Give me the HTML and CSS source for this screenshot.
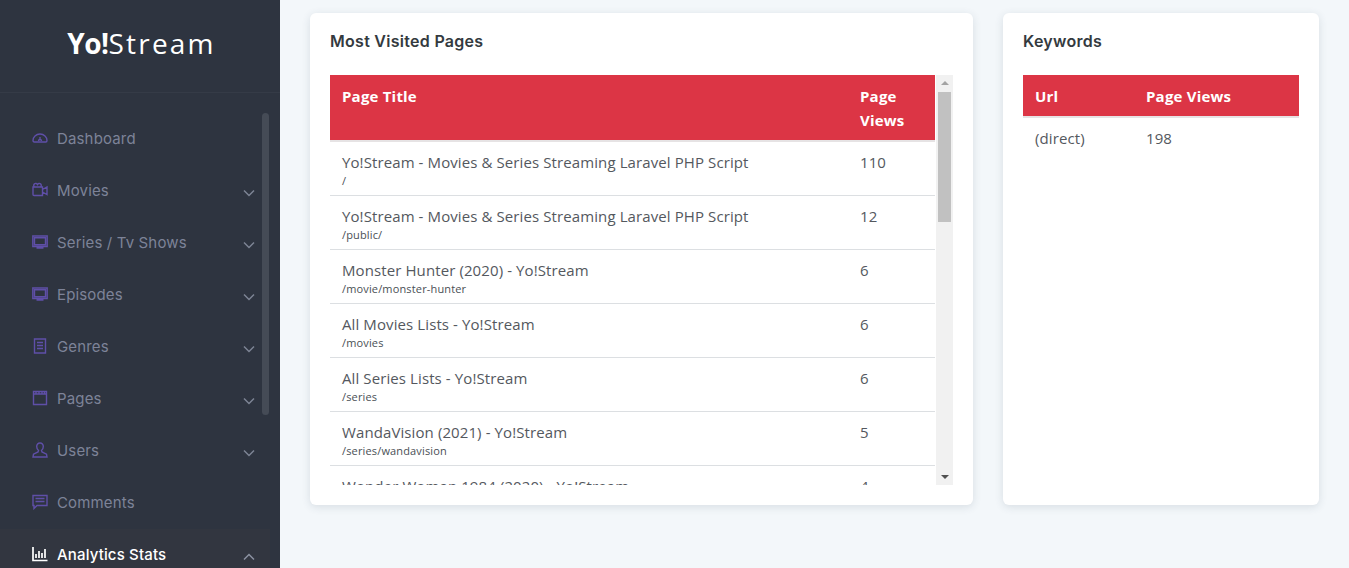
FILE: index.html
```html
<!DOCTYPE html>
<html lang="en">
<head>
<meta charset="utf-8">
<title>Analytics Stats</title>
<link rel="stylesheet" href="styles.css">
</head>
<body>
<div class="app">
  <aside class="sidebar">
    <div class="brand"><span class="brand-yo">Yo!</span><span class="brand-stream">Stream</span></div>
    <span class="side-thumb"></span>
    <nav class="menu">
      <a class="item"><svg class="ico" viewBox="0 0 16 16"><path d="M1 10.500C1 7 4 4 8 4s7 3 7 6.500c0 .8-.5 1.500-1.300 1.500H2.300C1.500 12 1 11.300 1 10.500zM8 7v3M6.500 11a1.500 1.500 0 0 1 3 0"/></svg><span>Dashboard</span></a>
      <a class="item"><svg class="ico" viewBox="0 0 16 16"><path d="M1 5h9.500v8.500H2a1 1 0 0 1-1-1zM10.500 7.500 15 5v7.500l-4.500-2.500M2.500 5a2 2 0 1 1 3-2.500 2 2 0 1 1 3 2.500"/></svg><span>Movies</span><svg class="chev" viewBox="0 0 14 14"><path d="M2 4.500 7 9.500l5-5"/></svg></a>
      <a class="item"><svg class="ico" viewBox="0 0 16 16"><path d="M.8 2h14.400v10.500H.8zM2.500 3.700h11v7h-11zM4.500 14h7"/></svg><span>Series / Tv Shows</span><svg class="chev" viewBox="0 0 14 14"><path d="M2 4.500 7 9.500l5-5"/></svg></a>
      <a class="item"><svg class="ico" viewBox="0 0 16 16"><path d="M.8 2h14.400v10.500H.8zM2.500 3.700h11v7h-11zM4.500 14h7"/></svg><span>Episodes</span><svg class="chev" viewBox="0 0 14 14"><path d="M2 4.500 7 9.500l5-5"/></svg></a>
      <a class="item"><svg class="ico" viewBox="0 0 16 16"><path d="M2.500 1h11v14h-11zM5 4.500h6M5 7.500h6M5 10.500h6"/></svg><span>Genres</span><svg class="chev" viewBox="0 0 14 14"><path d="M2 4.500 7 9.500l5-5"/></svg></a>
      <a class="item"><svg class="ico" viewBox="0 0 16 16"><path d="M1.500 1.500h13v13h-13zM1.500 4h13M4 1.500V4M7 1.500V4M10 1.500V4M12.500 1.500V4"/></svg><span>Pages</span><svg class="chev" viewBox="0 0 14 14"><path d="M2 4.500 7 9.500l5-5"/></svg></a>
      <a class="item"><svg class="ico" viewBox="0 0 16 16"><path d="M8 1a3.300 3.300 0 0 0-3.300 3.500c0 2 1 3.300 1.800 4L6 10l-4.500 2.200L1 15h14l-.5-2.800L10 10l-.5-1.500c.8-.7 1.800-2 1.800-4A3.300 3.300 0 0 0 8 1z"/></svg><span>Users</span><svg class="chev" viewBox="0 0 14 14"><path d="M2 4.500 7 9.500l5-5"/></svg></a>
      <a class="item"><svg class="ico" viewBox="0 0 16 16"><path d="M1 1.500h14v10H5L2 14.500v-3H1zM3.500 4.500h9M3.500 7.500h9"/></svg><span>Comments</span></a>
      <a class="item active"><svg class="ico" viewBox="0 0 16 16"><path d="M1 1v13.500h14.500M4 12V8M7 12V5M10 12V7M13 12V3"/></svg><span>Analytics Stats</span><svg class="chev" viewBox="0 0 14 14"><path d="M2 9.500 7 4.500l5 5"/></svg></a>
    </nav>
  </aside>
  <main class="main">
    <section class="card card-pages">
      <h2 class="card-title">Most Visited Pages</h2>
      <div class="scroller">
        <div class="scroll-body">
          <table class="data">
            <thead>
              <tr><th>Page Title</th><th class="col-views">Page Views</th></tr>
            </thead>
            <tbody>
              <tr><td>Yo!Stream - Movies &amp; Series Streaming Laravel PHP Script<small>/</small></td><td>110</td></tr>
              <tr><td>Yo!Stream - Movies &amp; Series Streaming Laravel PHP Script<small>/public/</small></td><td>12</td></tr>
              <tr><td>Monster Hunter (2020) - Yo!Stream<small>/movie/monster-hunter</small></td><td>6</td></tr>
              <tr><td>All Movies Lists - Yo!Stream<small>/movies</small></td><td>6</td></tr>
              <tr><td>All Series Lists - Yo!Stream<small>/series</small></td><td>6</td></tr>
              <tr><td>WandaVision (2021) - Yo!Stream<small>/series/wandavision</small></td><td>5</td></tr>
              <tr><td>Wonder Woman 1984 (2020) - Yo!Stream</td><td>4</td></tr>
            </tbody>
          </table>
        </div>
        <div class="bar">
          <span class="arrow arrow-up"></span>
          <span class="bar-thumb"></span>
          <span class="arrow arrow-down"></span>
        </div>
      </div>
    </section>
    <section class="card card-keys">
      <h2 class="card-title">Keywords</h2>
      <table class="data keys">
        <thead><tr><th class="col-url">Url</th><th>Page Views</th></tr></thead>
        <tbody><tr><td>(direct)</td><td>198</td></tr></tbody>
      </table>
    </section>
  </main>
</div>
</body>
</html>
```
FILE: styles.css
```css
* { box-sizing: border-box; }
html, body { margin: 0; height: 100%; overflow: hidden; }
body { font-family: "Open Sans", sans-serif; color: #3a3f45; background: #f3f7fa; }
.app { display: flex; height: 568px; }

.sidebar { position: relative; width: 280px; flex: none; background: #2e3440; overflow: hidden; }
.brand { height: 93px; border-bottom: 1px solid #353b47; padding: 23px 0 0 3px; text-align: center; color: #fff; font-size: 28px; line-height: 40px; }
.brand-yo { font-weight: 700; letter-spacing: -.5px; }
.brand-stream { font-weight: 400; letter-spacing: 2.2px; }
.side-thumb { position: absolute; left: 262px; top: 113px; width: 7px; height: 302px; border-radius: 4px; background: #454b56; }

.menu { padding: 20px 10px 0 0; display: flex; flex-direction: column; }
.item { height: 52px; display: flex; align-items: center; padding: 0 14px 0 32px; color: #7d8398; font-family: "Inter", sans-serif; font-size: 15px; letter-spacing: .15px; }
.item span { margin: -2px 0 0 9px; flex: 1; }
.ico { width: 16px; height: 16px; flex: none; fill: none; stroke: #5f4fa8; stroke-width: 1.4; margin-top: -3px; }
.chev { width: 14px; height: 14px; flex: none; fill: none; stroke: #7d8494; stroke-width: 1.5; margin-top: 4px; }
.active { background: #323640; color: #fff; font-weight: 500; }
.active .ico { stroke: #fff; stroke-width: 1.7; }
.active .chev { stroke: #8b91a0; }

.main { flex: 1; display: flex; gap: 30px; padding: 13px 30px 0; align-items: flex-start; }
.card { height: 492px; background: #fff; border-radius: 6px; box-shadow: 0 2px 8px rgba(50, 70, 90, .14); padding: 20px; }
.card-pages { width: 663px; flex: none; }
.card-keys { width: 316px; flex: none; }
.card-title { margin: -1px 0 25px; font-family: "Inter", sans-serif; font-size: 16px; font-weight: 600; line-height: 18px; letter-spacing: .28px; color: #343a40; }

.scroller { display: flex; height: 410px; width: 623px; }
.scroll-body { width: 606px; flex: none; overflow: hidden; }
.data { width: 605px; border-collapse: collapse; font-size: 15px; letter-spacing: .1px; color: #54585e; }
.data th { background: #dc3545; color: #fff; font-size: 15px; font-weight: 700; line-height: 24px; letter-spacing: .2px; text-align: left; vertical-align: top; padding: 9px 12px 8px; border-bottom: 2px solid #e6e3e4; }
.data td { padding: 10px 12px 6px; line-height: 20px; vertical-align: top; border-bottom: 1px solid #dcdfe2; height: 54px; }
.data small { display: block; margin-top: 1px; font-size: 11px; line-height: 15px; letter-spacing: .15px; color: #4a4f55; }
.col-views { width: 87px; }
.data.keys { width: 276px; }
.keys td { border-bottom: 0; }
.col-url { width: 111px; }

.bar { width: 17px; flex: none; background: #f1f1f1; display: flex; flex-direction: column; align-items: center; }
.arrow { width: 0; height: 0; border-left: 4px solid transparent; border-right: 4px solid transparent; flex: none; }
.arrow-up { border-bottom: 4px solid #a3a3a3; margin: 6px 0; }
.arrow-down { border-top: 4px solid #505050; margin-top: auto; margin-bottom: 6px; }
.bar-thumb { width: 13px; height: 130px; background: #c1c1c1; flex: none; margin-top: 1px; }
```
